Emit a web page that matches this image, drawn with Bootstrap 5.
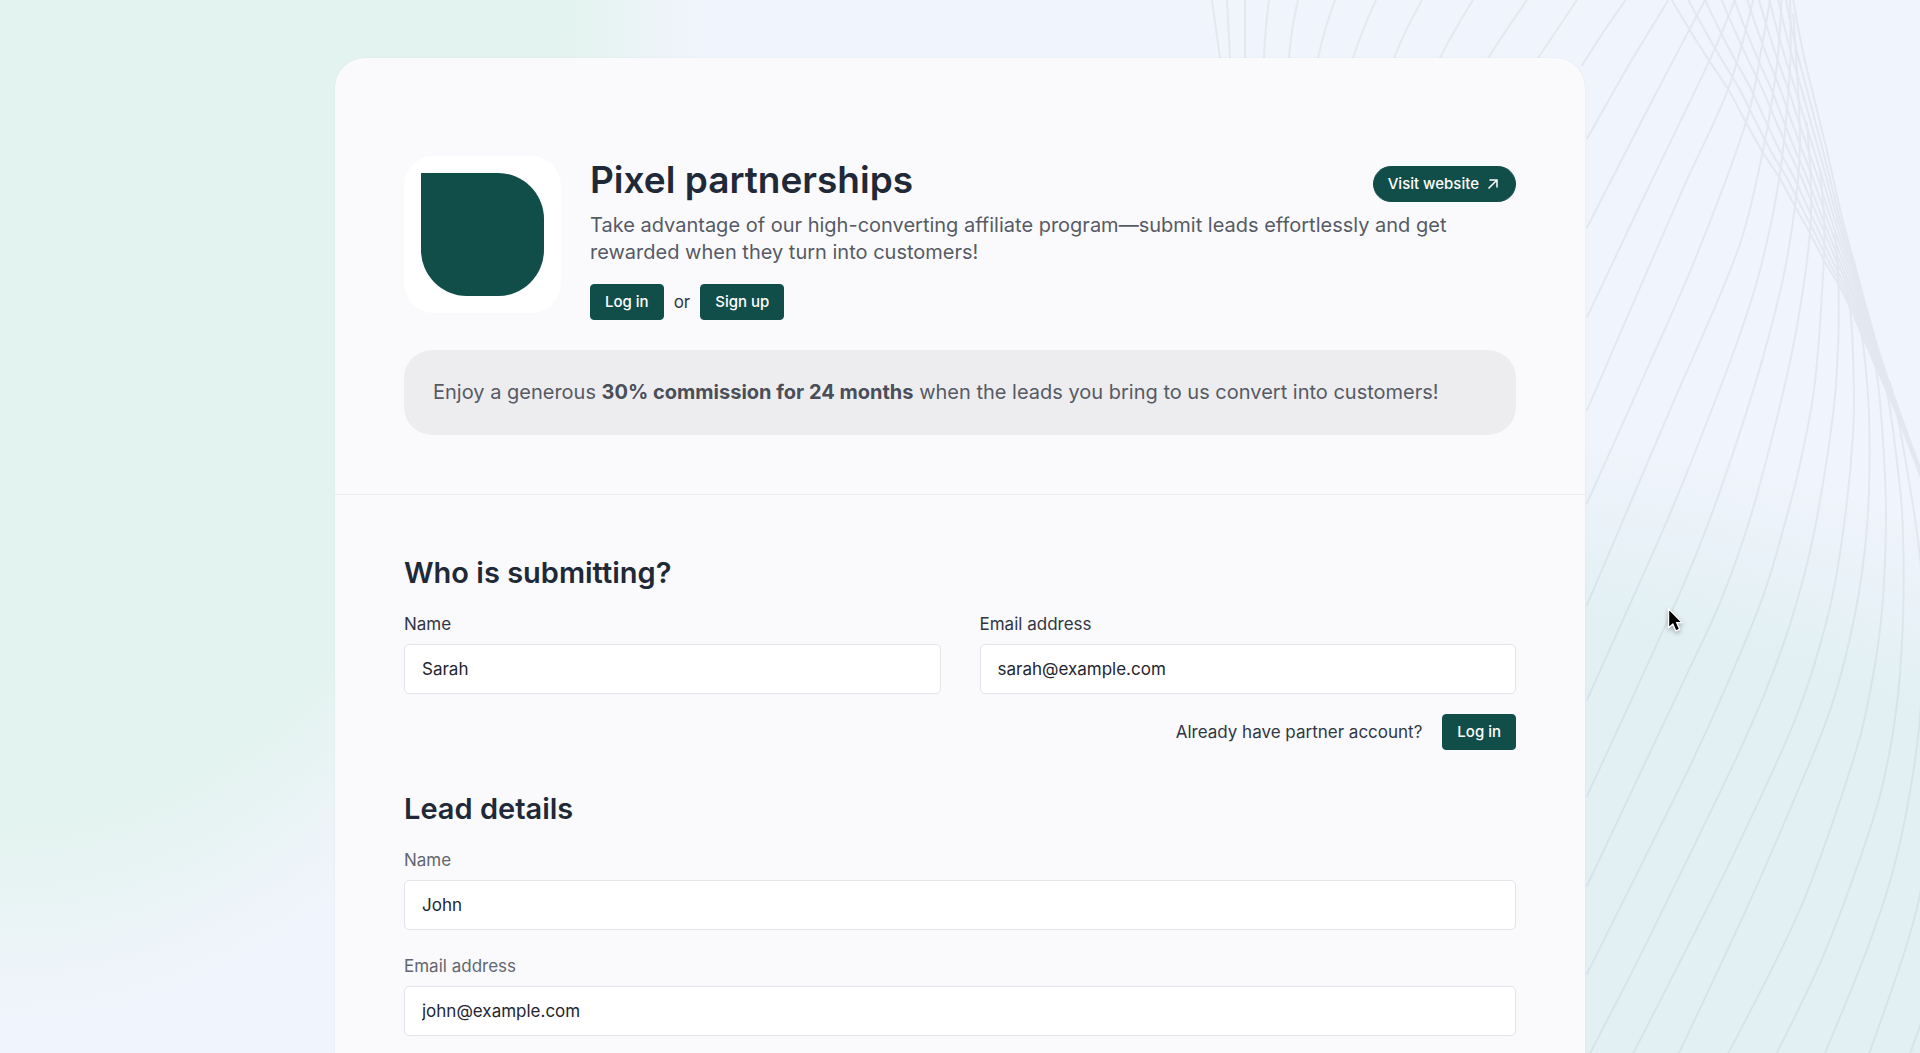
<!DOCTYPE html>
<html lang="en">
<head>
<meta charset="utf-8">
<meta name="viewport" content="width=device-width, initial-scale=1">
<title>Pixel partnerships</title>
<link href="https://cdn.jsdelivr.net/npm/bootstrap@5.3.0/dist/css/bootstrap.min.css" rel="stylesheet">
<style>
  :root { --brand: #124e49; --ink: #1f2937; --muted-ink: #565a64; }
  body {
    font-family: Inter, "Liberation Sans", sans-serif;
    font-size: 17px;
    line-height: 24px;
    color: #303642;
    background:
      radial-gradient(ellipse 700px 1020px at 0 0, #e3f3ef 80%, rgba(227,243,239,0) 100%) no-repeat,
      radial-gradient(ellipse 1100px 1060px at 1500px 1500px, #e2f0f4 84%, rgba(226,240,244,0) 100%) no-repeat,
      #f0f4fc;
  }
  .backdrop { top: 0; right: 0; z-index: 0; }
  .pointer { top: 606px; right: 234px; z-index: 3; filter: drop-shadow(0 2px 2px rgba(0,0,0,.3)); }
  .page { padding-top: 58px; z-index: 1; }
  .sheet { max-width: 1250px; background: #fafafd; border-radius: 30px 30px 0 0; box-shadow: 0 0 2px rgba(60,70,90,.08); }
  .intro { padding: 98px 69px 59px; border-bottom: 1px solid #ededf0; }
  .entry { padding: 59px 69px 17px; }
  .logo-tile { width: 157px; height: 157px; padding: 17px; border-radius: 30px; background: #fff; }
  .logo-shape { background: var(--brand); border-radius: 0 46px 46px 46px; }
  .intro-row { gap: 29px; }
  .intro-copy { padding-top: 2px; }
  .pitch { margin: 10px 0 14px; }
  .choices { gap: 10px; }
  h1 { font-size: 37px; line-height: 44px; font-weight: 600; color: var(--ink); }
  h2 { font-size: 29px; line-height: 38px; font-weight: 600; color: var(--ink); margin-bottom: 20px; }
  .copy { font-size: 20px; line-height: 27px; color: var(--muted-ink); }
  .copy strong { font-weight: 700; color: #4a4e59; }
  .btn-brand {
    --bs-btn-color: #fff; --bs-btn-bg: var(--brand); --bs-btn-border-color: var(--brand);
    --bs-btn-hover-color: #fff; --bs-btn-hover-bg: #0d3d39; --bs-btn-hover-border-color: #0d3d39;
    --bs-btn-active-color: #fff; --bs-btn-active-bg: #0d3d39;
    --bs-btn-padding-x: 14px; --bs-btn-padding-y: 7px;
    --bs-btn-font-size: 15px; --bs-btn-line-height: 20px; --bs-btn-font-weight: 500;
    --bs-btn-border-radius: 4px;
  }
  .offer { background: #ededef; border-radius: 28px; padding: 29px; margin-top: 30px; }
  .form-label { margin-bottom: 8px; }
  .soft-label { color: #62666f; }
  .form-control { height: 50px; padding: 0 17px; font-size: 17px; border-color: #e3e4e8; border-radius: 5px; color: #23262f; background: #fff; }
  .pair { --bs-gutter-x: 39px; }
</style>
</head>
<body class="position-relative overflow-x-hidden">

<svg class="backdrop position-absolute" width="740" height="1053" viewBox="0 0 740 1053" fill="none" stroke="#e5e8ed" stroke-width="2" aria-hidden="true">
  <path d="M32 0L40 58M47 0L50 58M65 0V58M89 0Q85 30 84 58M118 0Q111 30 109 58M155 0Q144 30 138 58M196 0Q182 30 173 58M242 0Q225 30 214 58M293 0Q274 30 260 58M347 0Q326 30 308 58M397 0L358 58"/>
  <g id="waves" transform="translate(400 0) scale(.3333 .3381)" stroke="#1c3c46" opacity=".06"></g>
</svg>

<svg class="pointer position-absolute" width="22" height="30" viewBox="0 0 20 28" aria-hidden="true">
  <path d="M4 2.500V20.500L8 16.800L10.800 23.300L14.300 21.800L11.500 15.500H16.600Z" fill="#000" stroke="#fff" stroke-width="1.200" stroke-linejoin="round"/>
</svg>

<main class="page position-relative d-flex flex-column min-vh-100">
  <div class="sheet w-100 mx-auto flex-grow-1">
    <header class="intro">
      <div class="intro-row d-flex align-items-start">
        <div class="logo-tile flex-shrink-0"><div class="logo-shape w-100 h-100"></div></div>
        <div class="intro-copy flex-grow-1">
          <div class="d-flex justify-content-between align-items-end">
            <h1 class="mb-0">Pixel partnerships</h1>
            <a href="#" class="btn btn-brand rounded-pill d-inline-flex align-items-center gap-2">Visit website
              <svg width="14" height="12" viewBox="0 0 14 12" fill="none" stroke="currentColor" stroke-width="1.500" aria-hidden="true"><path d="M1.500 10.500L10 2M2.500 2H10V9.500"/></svg>
            </a>
          </div>
          <p class="copy pitch pe-5">Take advantage of our high-converting affiliate program—submit leads effortlessly and get rewarded when they turn into customers!</p>
          <div class="choices d-flex align-items-center pt-1">
            <button type="button" class="btn btn-brand">Log in</button>
            <span>or</span>
            <button type="button" class="btn btn-brand">Sign up</button>
          </div>
        </div>
      </div>
      <div class="offer copy">Enjoy a generous <strong>30% commission for 24 months</strong> when the leads you bring to us convert into customers!</div>
    </header>

    <form class="entry">
      <h2>Who is submitting?</h2>
      <div class="row pair">
        <div class="col-md-6">
          <label class="form-label" for="partnerName">Name</label>
          <input type="text" class="form-control" id="partnerName" value="Sarah">
        </div>
        <div class="col-md-6">
          <label class="form-label" for="partnerEmail">Email address</label>
          <input type="email" class="form-control" id="partnerEmail" value="sarah@example.com">
        </div>
      </div>
      <div class="d-flex justify-content-end align-items-center mt-3 pt-1 mb-4 pb-3">
        <span class="me-3 pe-1">Already have partner account?</span>
        <button type="button" class="btn btn-brand">Log in</button>
      </div>
      <h2>Lead details</h2>
      <div class="mb-4">
        <label class="form-label soft-label" for="leadName">Name</label>
        <input type="text" class="form-control" id="leadName" value="John">
      </div>
      <div>
        <label class="form-label soft-label" for="leadEmail">Email address</label>
        <input type="email" class="form-control" id="leadEmail" value="john@example.com">
      </div>
    </form>
  </div>
</main>

<script src="https://cdn.jsdelivr.net/npm/bootstrap@5.3.0/dist/js/bootstrap.bundle.min.js"></script>
<script>
  // Wave curves: each list holds x, y pairs that a smooth path runs through.
  const curves = [
    [137,0, 70,95, 5,195],
    [265,0, 145,195, 20,412],
    [375,0, 210,310, 20,675],
    [465,0, 388,180, 210,545, 20,940],
    [520,0, 445,262, 308,560, 165,885, 20,1215],
    [570,0, 545,140, 498,362, 350,755, 195,1105, 20,1490],
    [605,0, 590,200, 548,450, 490,690, 415,885, 280,1190, 123,1553, 20,1792],
    [630,0, 630,200, 598,525, 540,800, 465,1030, 372,1270, 258,1547, 20,2072],
    [640,40, 660,400, 645,610, 610,820, 548,1060, 476,1290, 385,1547, 285,1787, 20,2357],
    [680,360, 692,520, 690,690, 650,970, 590,1240, 506,1547, 418,1787, 305,2027, 20,2622],
    [720,500, 732,640, 730,800, 705,1130, 665,1350, 615,1547, 548,1767, 440,2027, 310,2307, 20,2882],
    [765,690, 775,830, 775,1000, 760,1220, 708,1547, 660,1747, 595,1947, 495,2187, 300,2587, 160,2867, 30,3115],
    [795,820, 812,930, 820,1080, 820,1270, 793,1547, 745,1817, 650,2117, 490,2467, 350,2747, 160,3115],
    [830,900, 852,1040, 868,1250, 862,1547, 825,1817, 755,2087, 650,2347, 500,2687, 297,3115],
    [870,980, 895,1140, 912,1350, 918,1547, 905,1817, 870,2047, 820,2247, 690,2617, 590,2837, 445,3115],
    [905,1080, 930,1210, 955,1400, 968,1547, 970,1797, 955,2047, 920,2267, 865,2467, 730,2827, 590,3115],
    [930,1130, 955,1240, 990,1440, 1007,1547, 1024,1700, 1026,1950, 1018,2147, 980,2397, 930,2607, 850,2837, 735,3115],
    [1040,2500, 1020,2647, 970,2827, 868,3115],
    [1040,2960, 1018,3040, 990,3115]
  ];
  // Crossing fan: spread evenly between its two outer strands.
  const ys = [0, 90, 180, 265, 362, 450, 525, 610, 690, 775, 840, 920, 1050, 1220, 1410];
  const lower = [275, 330, 388, 445, 498, 548, 598, 645, 690, 735, 775, 815, 872, 948, 1022];
  const upper = [640, 656, 675, 696, 720, 742, 759, 778, 798, 822, 840, 862, 900, 959, 1030];
  [275, 325, 375, 425, 463, 502, 537, 568, 595, 618, 640].forEach(top => {
    const w = (top - 275) / 365;
    curves.push(ys.flatMap((y, i) => [lower[i] + (upper[i] - lower[i]) * w, y]));
  });
  const group = document.getElementById('waves');
  curves.forEach(c => {
    const n = c.length / 2;
    const at = i => { const k = Math.max(0, Math.min(n - 1, i)); return [c[2 * k], c[2 * k + 1]]; };
    let d = 'M' + at(0);
    for (let i = 0; i < n - 1; i++) {
      const [a, b, e, f] = [at(i - 1), at(i), at(i + 1), at(i + 2)];
      d += 'C' + [b[0] + (e[0] - a[0]) / 6, b[1] + (e[1] - a[1]) / 6,
                  e[0] - (f[0] - b[0]) / 6, e[1] - (f[1] - b[1]) / 6, e[0], e[1]].join(' ');
    }
    const path = document.createElementNS('http://www.w3.org/2000/svg', 'path');
    path.setAttribute('d', d);
    path.setAttribute('vector-effect', 'non-scaling-stroke');
    group.appendChild(path);
  });
</script>
</body>
</html>
